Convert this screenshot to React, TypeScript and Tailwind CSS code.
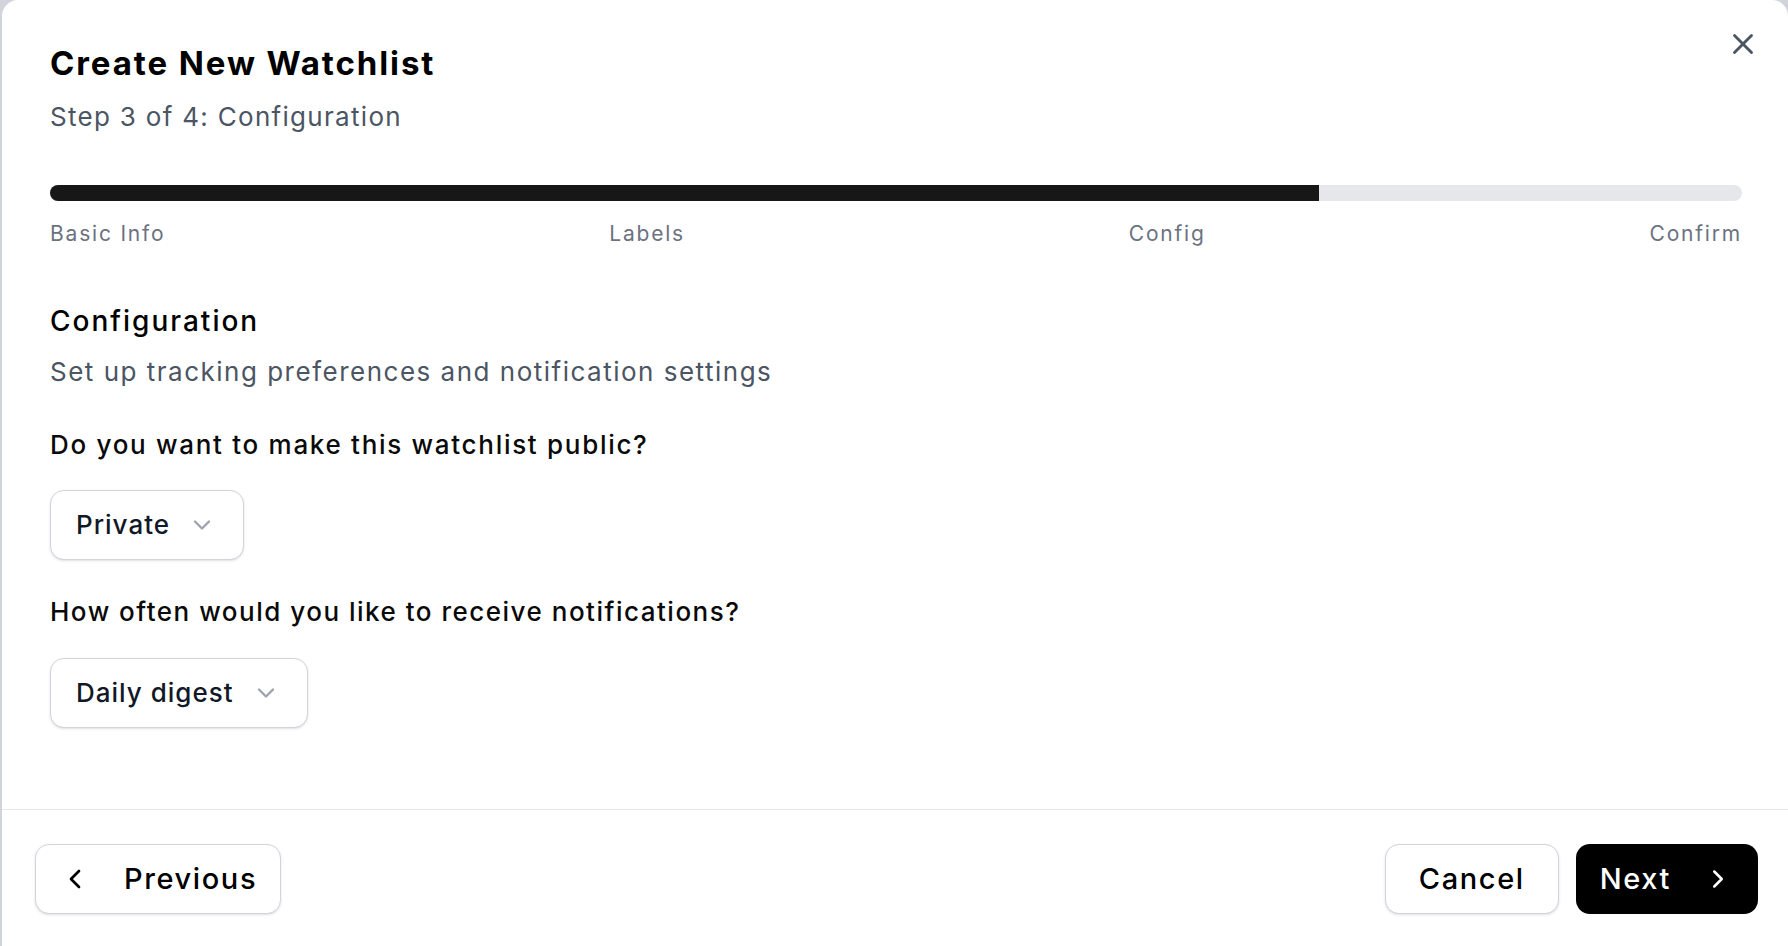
import { X, ChevronDown, ChevronLeft, ChevronRight } from 'lucide-react';

const steps = ['Basic Info', 'Labels', 'Config', 'Confirm'];

function SelectBox({ value }: { value: string }) {
  return (
    <button className="flex h-[70px] items-center gap-[18px] rounded-[14px] border-[1.5px] border-[#d1d5db] bg-white pl-[25px] pr-[27px] text-[26px] font-medium leading-[32px] tracking-[1px] text-[#111827] shadow-sm">
      <span>{value}</span>
      <ChevronDown size={28} strokeWidth={2} className="text-[#9ca3af]" />
    </button>
  );
}

export default function App() {
  return (
    <div className="h-screen w-full overflow-hidden bg-[#d1d5db] pl-[2px] font-['Inter',sans-serif]">
      <div className="relative flex h-full flex-col rounded-t-[16px] bg-white">
        {/* Close */}
        <button className="absolute right-[28px] top-[27px] text-[#4b5563]">
          <X size={34} strokeWidth={2} />
        </button>

        {/* Body */}
        <div className="flex-1 pl-[48px] pr-[46px] pt-[43px]">
          <h2 className="text-[33px] font-bold leading-[40px] tracking-[1.9px] text-black">
            Create New Watchlist
          </h2>
          <p className="mt-[18px] text-[26px] leading-[32px] tracking-[1.3px] text-[#4b5563]">
            Step 3 of 4: Configuration
          </p>

          {/* Progress */}
          <div className="mt-[52px] h-4 overflow-hidden rounded-full bg-[#e5e7eb]">
            <div className="h-full w-3/4 bg-[#171717]" />
          </div>
          <div className="mt-[21px] flex justify-between text-[21px] leading-[24px] tracking-[1.8px] text-[#6b7280]">
            {steps.map((s) => (
              <span key={s}>{s}</span>
            ))}
          </div>

          <h3 className="mt-[58px] text-[28px] font-medium leading-[34px] tracking-[2px] text-black">
            Configuration
          </h3>
          <p className="mt-[18px] text-[26px] leading-[32px] tracking-[1.5px] text-[#4b5563]">
            Set up tracking preferences and notification settings
          </p>

          <div className="mt-[41px] flex flex-col items-start">
            <label className="text-[26px] font-medium leading-[32px] tracking-[1.7px] text-[#0a0a0a]">
              Do you want to make this watchlist public?
            </label>
            <div className="mt-[29px]">
              <SelectBox value="Private" />
            </div>
          </div>

          <div className="mt-[36px] flex flex-col items-start">
            <label className="text-[26px] font-medium leading-[32px] tracking-[1.5px] text-[#0a0a0a]">
              How often would you like to receive notifications?
            </label>
            <div className="mt-[30px]">
              <SelectBox value="Daily digest" />
            </div>
          </div>
        </div>

        {/* Footer */}
        <div className="flex h-[137px] shrink-0 items-start justify-between border-t border-[#e5e7eb] pl-[33px] pr-[30px] pt-[34px]">
          <button className="flex h-[70px] items-center gap-[33px] rounded-[14px] border-[1.5px] border-[#d1d5db] bg-white pl-[23px] pr-[23px] text-[29px] font-medium leading-[36px] tracking-[1.6px] text-black shadow-sm">
            <ChevronLeft size={32} strokeWidth={2} />
            <span>Previous</span>
          </button>
          <div className="flex items-center gap-[17px]">
            <button className="flex h-[70px] items-center rounded-[14px] border-[1.5px] border-[#d1d5db] bg-white px-[33px] text-[29px] font-medium leading-[36px] tracking-[1.6px] text-black shadow-sm">
              Cancel
            </button>
            <button className="flex h-[70px] items-center gap-[32px] rounded-[14px] bg-black pl-[24px] pr-[25px] text-[29px] font-medium leading-[36px] tracking-[1.6px] text-white">
              <span>Next</span>
              <ChevronRight size={30} strokeWidth={2} />
            </button>
          </div>
        </div>
      </div>
    </div>
  );
}
